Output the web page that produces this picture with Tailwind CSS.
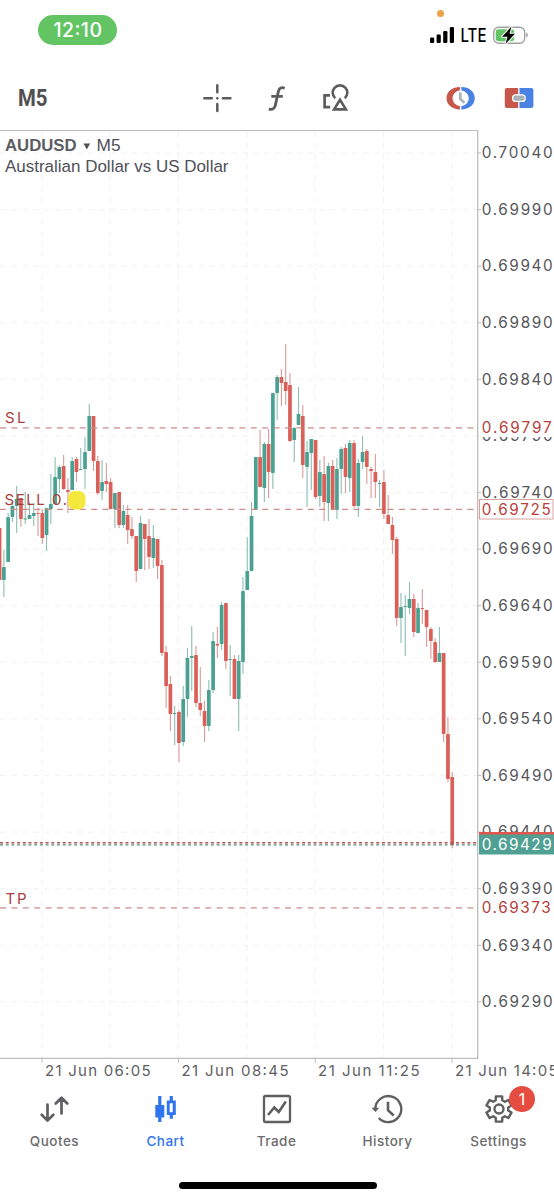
<!DOCTYPE html>
<html lang="en">
<head>
    <meta charset="UTF-8">
    <meta name="viewport" content="width=device-width, initial-scale=1.0">
    <script src="https://cdn.jsdelivr.net/npm/@tailwindcss/browser@4"></script>
    <title>AUDUSD M5</title>
</head>
<body class="bg-white">
<div class="w-[554px] h-[1200px] flex flex-col overflow-hidden bg-white font-['Inter',sans-serif] text-[#58585a]">

    <!-- Status bar -->
    <header class="h-[66px] shrink-0 relative flex items-start justify-between pl-[38px] pr-[26px] pt-[15px]">
        <div class="w-[79px] h-[30px] rounded-full bg-[#62c463] text-white flex items-center justify-center">
            <svg width="50" height="30"><text x="0.500" y="22" font-size="19.500" font-weight="500" fill="#fff" textLength="48.500">12:10</text></svg>
        </div>
        <span class="absolute left-[437px] top-[10px] size-[7px] rounded-full bg-[#eda244]"></span>
        <svg width="100" height="30" viewBox="428 15 100 30">
            <g fill="#000">
                <rect x="430" y="37.5" width="4.2" height="5.5" rx="1.2"/>
                <rect x="436.600" y="34.500" width="4.2" height="8.5" rx="1.2"/>
                <rect x="443.200" y="31" width="4.2" height="12" rx="1.2"/>
                <rect x="449.800" y="27" width="4.2" height="16" rx="1.2"/>
            </g>
            <text x="460.500" y="42" font-size="18" font-weight="500" fill="#000" textLength="26" lengthAdjust="spacingAndGlyphs">LTE</text>
            <rect x="493.700" y="27.200" width="31" height="16" rx="5" fill="#fff" stroke="#a2a2a2" stroke-width="1.400"/>
            <rect x="495.700" y="29.200" width="18.500" height="12" rx="3" fill="#62c463"/>
            <path d="M526.200 32.500v5c1-.4 1.700-1.300 1.700-2.500s-.7-2.100-1.700-2.500z" fill="#a2a2a2"/>
            <path d="M511.500 26.500l-9.500 10.300h5.500l-2 7.200 9.500-10.300h-5.500z" fill="#000" stroke="#fff" stroke-width="2" paint-order="stroke" stroke-linejoin="round"/>
        </svg>
    </header>

    <!-- Toolbar -->
    <nav class="h-[64px] shrink-0">
        <svg width="554" height="64" viewBox="0 66 554 64" fill="none" stroke="#5c5c5c">
            <text x="18" y="105.800" font-family="Roboto" font-size="23.500" font-weight="700" fill="#505050" stroke="none" textLength="29.500" lengthAdjust="spacingAndGlyphs">M5</text>
            <!-- crosshair -->
            <path d="M217.300 85.300v7M217.300 103.900v7M204.300 98.300h7.500M222.900 98.300h7.500" stroke-width="2.500" stroke-linecap="round"/>
            <circle cx="217.300" cy="98.300" r="1.300" fill="#5c5c5c" stroke="none"/>
            <!-- indicators -->
            <path d="M284.700 88.200c-3.200-1.200-5.500-.2-6.300 3.200l-3.100 14c-.7 3.400-2.800 4.500-6.500 3.700M271.300 96.300h11.500" stroke-width="2.800"/>
            <!-- objects -->
            <path d="M330 95.400h-5.400v11.700h5.600" stroke-width="2.700"/>
            <path d="M335.200 98.200a7.300 7.300 0 1 1 9.600 0" stroke-width="2.600"/>
            <path d="M340 99.700l5.900 9.700h-11.800z" stroke-width="2.600"/>
            <!-- buy/sell clock -->
            <path d="M460 87c-7.800 0-13.500 4.800-13.500 11.200s5.700 11.200 13.500 11.200v-3.200c-4.600-1-7.400-4-7.400-8s2.800-7 7.400-8z" fill="#c7574a" stroke="none"/>
            <path d="M461.300 87c7.800 0 13.500 4.800 13.500 11.200s-5.700 11.200-13.500 11.200v-3.200c4.600-1 7.400-4 7.400-8s-2.800-7-7.400-8z" fill="#4a82e4" stroke="none"/>
            <path d="M460.300 92.600v6.300l4.300 4" stroke="#a6b2b8" stroke-width="2.600"/>
            <!-- one click trade -->
            <path d="M507 88h11.200v20H507a2.200 2.200 0 0 1-2.200-2.200V90.200A2.200 2.200 0 0 1 507 88z" fill="#c7574a" stroke="none"/>
            <path d="M519.500 88h11.700a2.200 2.200 0 0 1 2.200 2.200v15.600a2.200 2.200 0 0 1-2.200 2.200h-11.700z" fill="#4a82e4" stroke="none"/>
            <rect x="512.600" y="94.800" width="12.600" height="6.600" rx="3" fill="#a6b2b8" stroke="#fff" stroke-width="1.200"/>
        </svg>
    </nav>

    <!-- Price chart -->
    <main class="h-[955px] shrink-0">
        <svg id="chart" width="554" height="955" viewBox="0 130 554 955">
            <g id="grid" stroke="#f2f2f2" stroke-width="1" stroke-dasharray="6 5"></g>
            <g id="candles"></g>
            <g stroke="#cb8e8b" stroke-width="1.200" stroke-dasharray="6 5.400">
                <path d="M0 427.800H477"/>
                <path d="M0 509.300H477"/>
                <path d="M0 907.800H477"/>
            </g>
            <path d="M0 842.800H477" stroke="#b8504e" stroke-width="1.600" stroke-dasharray="3 2.700"/>
            <path d="M0 844.900H477" stroke="#5d8a83" stroke-width="1.400" stroke-dasharray="3 2.700"/>
            <path d="M0 130.300H477.700V1058.300H0" fill="none" stroke="#bdbdbd" stroke-width="1.300"/>

            <g font-family="Liberation Sans" font-size="16.700" fill="#505057">
                <text x="5" y="151" font-size="16.300" font-weight="700" fill="#5c5c63" textLength="71.500" lengthAdjust="spacingAndGlyphs">AUDUSD</text>
                <path d="M83.500 143.500h6.600l-3.300 6z"/>
                <text x="96.500" y="151" textLength="24" lengthAdjust="spacingAndGlyphs">M5</text>
                <text x="5" y="172" textLength="223.500" lengthAdjust="spacingAndGlyphs">Australian Dollar vs US Dollar</text>
            </g>
            <g font-size="15" fill="#a8403d">
                <text x="5" y="423.300" textLength="20.500">SL</text>
                <text x="4.500" y="505" textLength="62.500">SELL 0.</text>
                <text x="5.500" y="903.500" textLength="21">TP</text>
            </g>
            <rect x="68" y="491" width="17.500" height="18.500" rx="6.500" fill="#f3e93c"/>

            <g id="prices" font-size="15.300" fill="#55565a"></g>

            <!-- order levels on the price axis -->
            <rect x="479" y="418" width="75" height="19" fill="#fff"/>
            <text x="481.700" y="433.300" font-size="15.300" fill="#b53f3b" textLength="70">0.69797</text>
            <rect x="479.500" y="499.500" width="73.500" height="19.500" fill="#fff" stroke="#dba29c"/>
            <text x="481.700" y="514.800" font-size="15.300" fill="#bb403b" textLength="69">0.69725</text>
            <rect x="479" y="832" width="75" height="3" fill="#e0564d"/>
            <rect x="479" y="834.500" width="75" height="20" fill="#50a194"/>
            <text x="481.700" y="850" font-size="15.300" fill="#fff" textLength="70">0.69429</text>
            <text x="481.700" y="913.300" font-size="15.300" fill="#b53f3b" textLength="69">0.69373</text>

            <g stroke="#bdbdbd">
                <path d="M42 1058v5M178.500 1058v5M315.300 1058v5M452 1058v5"/>
            </g>
            <g font-size="15" fill="#606064">
                <text x="45" y="1076" textLength="105.500">21 Jun 06:05</text>
                <text x="181.500" y="1076" textLength="107">21 Jun 08:45</text>
                <text x="318" y="1076" textLength="101.500">21 Jun 11:25</text>
                <text x="455" y="1076" textLength="102.500">21 Jun 14:05</text>
            </g>
        </svg>
    </main>

    <!-- Tab bar -->
    <footer class="grow flex flex-col items-center relative">
        <div class="w-[555px] -ml-px grid grid-cols-5 text-[13.5px] leading-[18px] tracking-[0.5px] font-medium text-[#6c6c6e]">
            <div class="flex flex-col items-center gap-[8px] pt-[6px]">
                <svg width="34" height="33" viewBox="38 1091 34 33" fill="none" stroke="#5f5f61" stroke-width="2.700" stroke-linecap="round" stroke-linejoin="round">
                    <path d="M47.500 1104.500v15.500M41.700 1114.800l5.800 5.800 5.800-5.800M61.500 1113.500v-15.500M55.700 1103.500l5.800-5.800 5.800 5.800"/>
                </svg>
                <span>Quotes</span>
            </div>
            <div class="flex flex-col items-center gap-[8px] pt-[6px] text-[#2f74ef]">
                <svg width="34" height="33" viewBox="149 1091 34 33" fill="#2f74ef">
                    <path d="M155.300 1105h2.900v-9h3.200v9h2.900v12.500h-2.900v4.500h-3.200v-4.500h-2.900z"/>
                    <path fill-rule="evenodd" d="M166.800 1100.500h2.900v-4.500h3.200v4.500h2.900v14.500h-2.900v3.800h-3.200v-3.800h-2.900zM169.700 1103.300v9h3v-9z"/>
                </svg>
                <span>Chart</span>
            </div>
            <div class="flex flex-col items-center gap-[8px] pt-[6px]">
                <svg width="34" height="33" viewBox="260 1091 34 33" fill="none" stroke="#5f5f61" stroke-width="2.300">
                    <rect x="264" y="1096" width="26" height="26" rx="1.500"/>
                    <path d="M268 1115l6.300-7.500 4.500 4.500 7-10.500" stroke-width="2.600"/>
                </svg>
                <span>Trade</span>
            </div>
            <div class="flex flex-col items-center gap-[8px] pt-[6px]">
                <svg width="34" height="33" viewBox="371 1091 34 33" fill="none" stroke="#5f5f61" stroke-width="2.400">
                    <path d="M375.300 1108.800a13 13 0 1 1 3.500 9.200"/>
                    <path d="M371.500 1107.800h7.800l-3.900 4.200z" fill="#5f5f61" stroke="none"/>
                    <path d="M388 1101.800v8.500l5.700 5.200" stroke-width="2.600"/>
                </svg>
                <span>History</span>
            </div>
            <div class="flex flex-col items-center gap-[8px] pt-[6px] relative">
                <svg width="34" height="33" viewBox="482 1091 34 33" fill="none" stroke="#5f5f61" stroke-width="2.400" stroke-linejoin="round">
                    <path id="gear"/>
                    <circle cx="499" cy="1109" r="4.500"/>
                </svg>
                <span>Settings</span>
                <span class="absolute left-[66px] top-[1px] size-[26px] rounded-full bg-[#e54d40] text-white text-[16px] font-normal tracking-normal flex items-center justify-center">1</span>
            </div>
        </div>
        <div class="w-[198px] h-[7px] rounded-full bg-black absolute left-[178.500px] top-[96.500px]"></div>
    </footer>
</div>

<script>
    // Each candle: direction (1 up, 0 down), high, body top, body bottom, low
    const candles = [
        [0,528,528,580,580],[1,550,567,580,597],[1,513,517,562,562],[1,502,506,517,522],[1,486,499,506,533],
        [0,498,498,519,527],[1,492,518.5,519.5,524],[1,502,515,519,519],[1,503,513,516,526],[0,508,513,514,536],
        [0,509,513,538,544],[1,508,508,535,551],[1,474,504,509,524],[1,457,477,504,505],[1,465,467,479,493],
        [0,455,466,489,490],[0,478,490,492,513],[1,457,461,490,490],[0,457,459,472,482],[1,448,469,470,470],
        [1,437,452,469,489],[1,404,416,451,451],[0,416,416,461,471],[0,456,461,493,495],[1,460,482,491,500],
        [0,463,481,484,492],[0,478,482,509,509],[1,493,493,509,528],[0,492,492,525,528],[1,505,511,525,528],
        [0,505,515,530,544],[0,517,529,536,539],[0,536,536,571,582],[1,516,523,569,569],[0,524,524,539,570],
        [0,519,536,557,569],[1,525,538,558,568],[0,539,539,566,579],[0,560,565,653,656],[0,646,652,686,708],
        [0,676,684,714,731],[1,706,713,714,745],[0,710,712,743,762],[1,686,699,742,746],[1,648,658,699,717],
        [1,626,656,658,691],[0,646,655,703,707],[0,667,703,710,716],[0,701,711,726,742],[1,680,690,726,731],
        [1,632,641,690,693],[0,627,644,645.5,658],[1,602,605,644,650],[0,603,603,661,669],[1,645,659,660,696],
        [0,655,659,699,699],[1,655,661,699,731],[1,577,591,662,674],[1,537,571,590,590],[1,502,516,571,571],
        [1,457,457,510,510],[0,430,457,487,487],[1,442,444,488,502],[0,429,444,472,498],[1,393,393,473,489],
        [1,375,377,393,420],[0,369,377,383,406],[0,344,382,391,405],[0,373,385,441,442],[1,427,428,440,462],
        [1,387,414,425,425],[0,405,416,465,478],[1,441,452,467,507],[1,439,439,453,490],[0,440,440,497,499],
        [1,460,472,496,507],[0,456,474,502,521],[1,463,466,503,521],[0,460,466,510,510],[1,458,469,510,519],
        [1,447,449,469,494],[0,444,448,477,493],[1,440,443,478,492],[0,440,443,506,508],[1,459,463,506,517],
        [1,436,452,462,469],[0,449,451,467,484],[0,467,469,471,498],[0,454,472,482,498],[1,480,483,484,507],
        [0,470,482,514,519],[0,495,515,524,524],[0,517,525,540,554],[0,537,539,618,626],[1,593,607,618,643],
        [1,595,606,607,656],[1,582,599,608,614],[0,594,599,632,637],[1,603,608,633,633],[0,589,608,609,624],
        [0,610,610,627,647],[0,627,629,641,659],[0,638,642,662,663],[1,627,653,662,662],[0,653,653,734,742],
        [0,717,734,779,782],[0,772,777,845,848]
    ];
    let candleMarkup = '';
    candles.forEach(([up, high, top, bottom, low], i) => {
        const x = -0.4 + i * 4.27;
        candleMarkup += `<path d="M${x} ${high}V${low}" stroke="${up ? '#8dbdb3' : '#dc9a96'}" stroke-width="1.100"/>`
            + `<rect x="${x - 1.85}" y="${top}" width="3.700" height="${bottom - top}" rx="0.400" fill="${up ? '#4ba191' : '#d95f59'}"/>`;
    });
    document.getElementById('candles').innerHTML = candleMarkup;

    // Price rows, 50 points apart
    let gridMarkup = '';
    let priceMarkup = '';
    for (let i = 0; i < 16; i++) {
        const y = 153 + i * 56.59;
        const price = ((70040 - i * 50) / 100000).toFixed(5);
        gridMarkup += `<path d="M0 ${y}H477"/>`;
        priceMarkup += `<path d="M478 ${y}h3" stroke="#bdbdbd"/><text x="481.700" y="${y + 5.3}" textLength="71">${price}</text>`;
    }
    [42, 110, 178.5, 247, 315.3, 383.5, 452].forEach(x => {
        gridMarkup += `<path d="M${x} 131V1058"/>`;
    });
    document.getElementById('grid').innerHTML = gridMarkup;
    document.getElementById('prices').innerHTML = priceMarkup;

    // Gear outline with six teeth
    const points = [];
    for (let i = 0; i < 6; i++) {
        [[-21, 9.3], [-14, 13], [14, 13], [21, 9.3]].forEach(([offset, r]) => {
            const a = (i * 60 - 90 + offset) * Math.PI / 180;
            points.push((499 + r * Math.cos(a)).toFixed(2) + ' ' + (1109 + r * Math.sin(a)).toFixed(2));
        });
    }
    document.getElementById('gear').setAttribute('d', 'M' + points.join('L') + 'z');
</script>
</body>
</html>
